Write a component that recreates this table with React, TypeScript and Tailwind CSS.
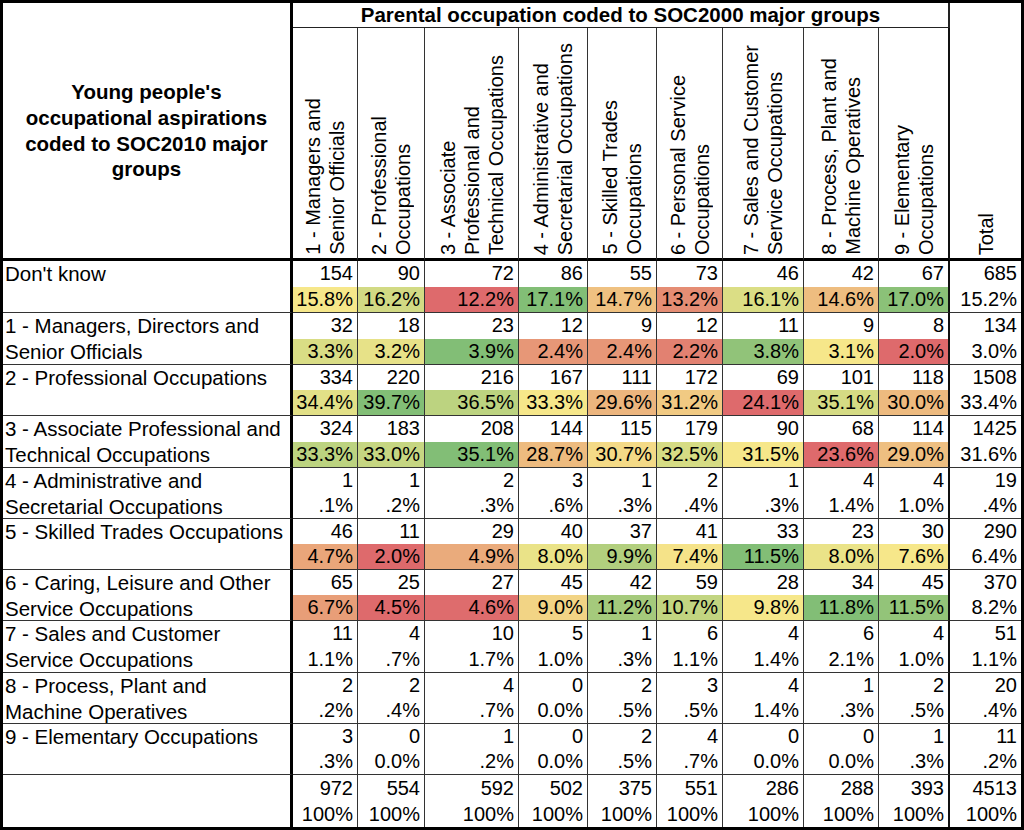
import React from "react";

type Row = {
  label: string[];
  counts: (number | string)[];
  pct: string[];
  color?: boolean;
};

const rows: Row[] = [
  {
    label: ["Don't know"],
    counts: [154, 90, 72, 86, 55, 73, 46, 42, 67, 685],
    pct: ["15.8%", "16.2%", "12.2%", "17.1%", "14.7%", "13.2%", "16.1%", "14.6%", "17.0%", "15.2%"],
    color: true,
  },
  {
    label: ["1 - Managers, Directors and", "Senior Officials"],
    counts: [32, 18, 23, 12, 9, 12, 11, 9, 8, 134],
    pct: ["3.3%", "3.2%", "3.9%", "2.4%", "2.4%", "2.2%", "3.8%", "3.1%", "2.0%", "3.0%"],
    color: true,
  },
  {
    label: ["2 - Professional Occupations"],
    counts: [334, 220, 216, 167, 111, 172, 69, 101, 118, 1508],
    pct: ["34.4%", "39.7%", "36.5%", "33.3%", "29.6%", "31.2%", "24.1%", "35.1%", "30.0%", "33.4%"],
    color: true,
  },
  {
    label: ["3 - Associate Professional and", "Technical Occupations"],
    counts: [324, 183, 208, 144, 115, 179, 90, 68, 114, 1425],
    pct: ["33.3%", "33.0%", "35.1%", "28.7%", "30.7%", "32.5%", "31.5%", "23.6%", "29.0%", "31.6%"],
    color: true,
  },
  {
    label: ["4 - Administrative and", "Secretarial Occupations"],
    counts: [1, 1, 2, 3, 1, 2, 1, 4, 4, 19],
    pct: [".1%", ".2%", ".3%", ".6%", ".3%", ".4%", ".3%", "1.4%", "1.0%", ".4%"],
  },
  {
    label: ["5 - Skilled Trades Occupations"],
    counts: [46, 11, 29, 40, 37, 41, 33, 23, 30, 290],
    pct: ["4.7%", "2.0%", "4.9%", "8.0%", "9.9%", "7.4%", "11.5%", "8.0%", "7.6%", "6.4%"],
    color: true,
  },
  {
    label: ["6 - Caring, Leisure and Other", "Service Occupations"],
    counts: [65, 25, 27, 45, 42, 59, 28, 34, 45, 370],
    pct: ["6.7%", "4.5%", "4.6%", "9.0%", "11.2%", "10.7%", "9.8%", "11.8%", "11.5%", "8.2%"],
    color: true,
  },
  {
    label: ["7 - Sales and Customer", "Service Occupations"],
    counts: [11, 4, 10, 5, 1, 6, 4, 6, 4, 51],
    pct: ["1.1%", ".7%", "1.7%", "1.0%", ".3%", "1.1%", "1.4%", "2.1%", "1.0%", "1.1%"],
  },
  {
    label: ["8 - Process, Plant and", "Machine Operatives"],
    counts: [2, 2, 4, 0, 2, 3, 4, 1, 2, 20],
    pct: [".2%", ".4%", ".7%", "0.0%", ".5%", ".5%", "1.4%", ".3%", ".5%", ".4%"],
  },
  {
    label: ["9 - Elementary Occupations"],
    counts: [3, 0, 1, 0, 2, 4, 0, 0, 1, 11],
    pct: [".3%", "0.0%", ".2%", "0.0%", ".5%", ".7%", "0.0%", "0.0%", ".3%", ".2%"],
  },
  {
    label: [],
    counts: [972, 554, 592, 502, 375, 551, 286, 288, 393, 4513],
    pct: ["100%", "100%", "100%", "100%", "100%", "100%", "100%", "100%", "100%", "100%"],
  },
];

const headers: string[][] = [
  ["1 - Managers and", "Senior Officials"],
  ["2 - Professional", "Occupations"],
  ["3 - Associate", "Professional and", "Technical Occupations"],
  ["4 - Administrative and", "Secretarial Occupations"],
  ["5 - Skilled Trades", "Occupations"],
  ["6 - Personal Service", "Occupations"],
  ["7 - Sales and Customer", "Service Occupations"],
  ["8 - Process, Plant and", "Machine Operatives"],
  ["9 - Elementary", "Occupations"],
];

const RED = [222, 106, 108];
const YEL = [246, 231, 138];
const GRN = [130, 190, 118];

function mix(a: number[], b: number[], t: number) {
  const c = a.map((v, i) => Math.round(v + (b[i] - v) * t));
  return `rgb(${c[0]}, ${c[1]}, ${c[2]})`;
}

function scaleColors(pcts: string[]): string[] {
  const vals = pcts.map((p) => parseFloat(p));
  const sorted = [...vals].sort((a, b) => a - b);
  const min = sorted[0];
  const max = sorted[sorted.length - 1];
  const mid = sorted[Math.floor(sorted.length / 2)];
  return vals.map((v) => {
    if (v <= mid) {
      const t = mid === min ? 1 : (v - min) / (mid - min);
      return mix(RED, YEL, t);
    }
    const t = max === mid ? 0 : (v - mid) / (max - mid);
    return mix(YEL, GRN, t);
  });
}

export default function App() {
  return (
    <div
      className="w-[1024px] h-[830px] bg-white text-black border-[3px] border-black"
      style={{ fontFamily: '"Liberation Sans", Arial, Helvetica, sans-serif' }}
    >
      <div className="grid grid-cols-[290px_65px_67px_94px_69px_69px_66px_81px_75px_71px_71px] grid-rows-[25px_233px_52px_52px_51px_52px_51px_51px_51px_52px_51px_51px_52px] w-full h-full">
        {/* Top-left header */}
        <div className="row-span-2 border-r-[3px] border-b-[3px] border-black flex items-center justify-center text-center font-bold text-[20.5px] leading-[25.7px]">
          <div>
            Young people's
            <br />
            occupational aspirations
            <br />
            coded to SOC2010 major
            <br />
            groups
          </div>
        </div>
        {/* Parental header */}
        <div className="col-span-9 border-b border-r-2 border-[#222] flex items-center justify-center font-bold text-[20.5px] leading-[24px] whitespace-nowrap">
          Parental occupation coded to SOC2000 major groups
        </div>
        {/* Total header */}
        <div className="row-span-2 border-b-[3px] border-black flex items-end justify-center pb-[3px]">
          <div className="[writing-mode:vertical-rl] rotate-180 text-[20px] leading-[24px] whitespace-nowrap">
            Total
          </div>
        </div>
        {/* Rotated headers */}
        {headers.map((lines, i) => (
          <div
            key={i}
            className={`border-b-[3px] border-b-black flex items-end justify-center pb-[3px] ${
              i === 8 ? "border-r-2 border-r-[#111]" : "border-r border-r-[#333]"
            }`}
          >
            <div className="[writing-mode:vertical-rl] rotate-180 text-[20px] leading-[24px] whitespace-nowrap">
              {lines.map((l, j) => (
                <div key={j}>{l}</div>
              ))}
            </div>
          </div>
        ))}
        {/* Data rows */}
        {rows.map((row, ri) => {
          const last = ri === rows.length - 1;
          const colors = row.color ? scaleColors(row.pct.slice(0, 9)) : [];
          return (
            <React.Fragment key={ri}>
              <div
                className={`border-r-[3px] border-r-black pl-[2px] text-[20.5px] leading-[25.5px] whitespace-nowrap ${
                  last ? "" : "border-b border-b-[#333]"
                }`}
              >
                {row.label.map((l, j) => (
                  <div key={j}>{l}</div>
                ))}
              </div>
              {row.counts.map((c, ci) => (
                <div
                  key={ci}
                  className={`flex flex-col text-[20px] leading-[25px] text-right ${
                    last ? "" : "border-b border-b-[#333]"
                  } ${
                    ci === 8
                      ? "border-r-2 border-r-[#111]"
                      : ci === 9
                      ? ""
                      : "border-r border-r-[#333]"
                  }`}
                >
                  <div className="flex-1 pr-[4px] flex items-center justify-end">{c}</div>
                  <div
                    className="flex-1 pr-[4px] flex items-center justify-end"
                    style={ci < 9 && row.color ? { backgroundColor: colors[ci] } : undefined}
                  >
                    {row.pct[ci]}
                  </div>
                </div>
              ))}
            </React.Fragment>
          );
        })}
      </div>
    </div>
  );
}
